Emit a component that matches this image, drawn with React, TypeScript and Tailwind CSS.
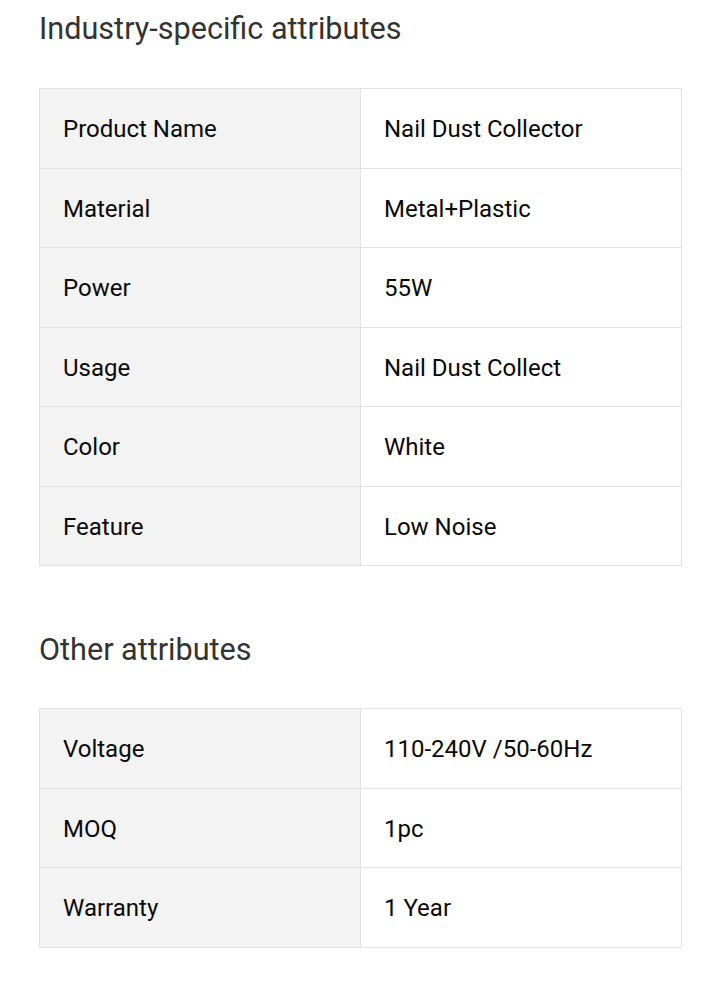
const INDUSTRY = [
  ["Product Name", "Nail Dust Collector"],
  ["Material", "Metal+Plastic"],
  ["Power", "55W"],
  ["Usage", "Nail Dust Collect"],
  ["Color", "White"],
  ["Feature", "Low Noise"],
];

const OTHER = [
  ["Voltage", "110-240V /50-60Hz"],
  ["MOQ", "1pc"],
  ["Warranty", "1 Year"],
];

const AttrTable = ({ rows }: { rows: string[][] }) => (
  <table className="w-full border-collapse table-fixed">
    <tbody>
      {rows.map(([k, v]) => (
        <tr key={k} className="h-[79.5px]">
          <td className="w-1/2 border border-[#e2e2e2] bg-[#f3f3f3] pl-[23px] pt-[2px] text-[24px] text-[#0a0a0a]">{k}</td>
          <td className="w-1/2 border border-[#e2e2e2] bg-white pl-[23px] pt-[2px] text-[24px] text-[#0a0a0a]">{v}</td>
        </tr>
      ))}
    </tbody>
  </table>
);

export default function App() {
  return (
    <div className="min-h-[999px] bg-white px-[39px] pt-[11px] font-['Roboto',sans-serif]">
      <h2 className="text-[30.6px] leading-[36px] text-[#333]">Industry-specific attributes</h2>
      <div className="mt-[41px]">
        <AttrTable rows={INDUSTRY} />
      </div>
      <h2 className="mt-[66px] text-[30.6px] leading-[36px] text-[#333]">Other attributes</h2>
      <div className="mt-[40px]">
        <AttrTable rows={OTHER} />
      </div>
    </div>
  );
}
